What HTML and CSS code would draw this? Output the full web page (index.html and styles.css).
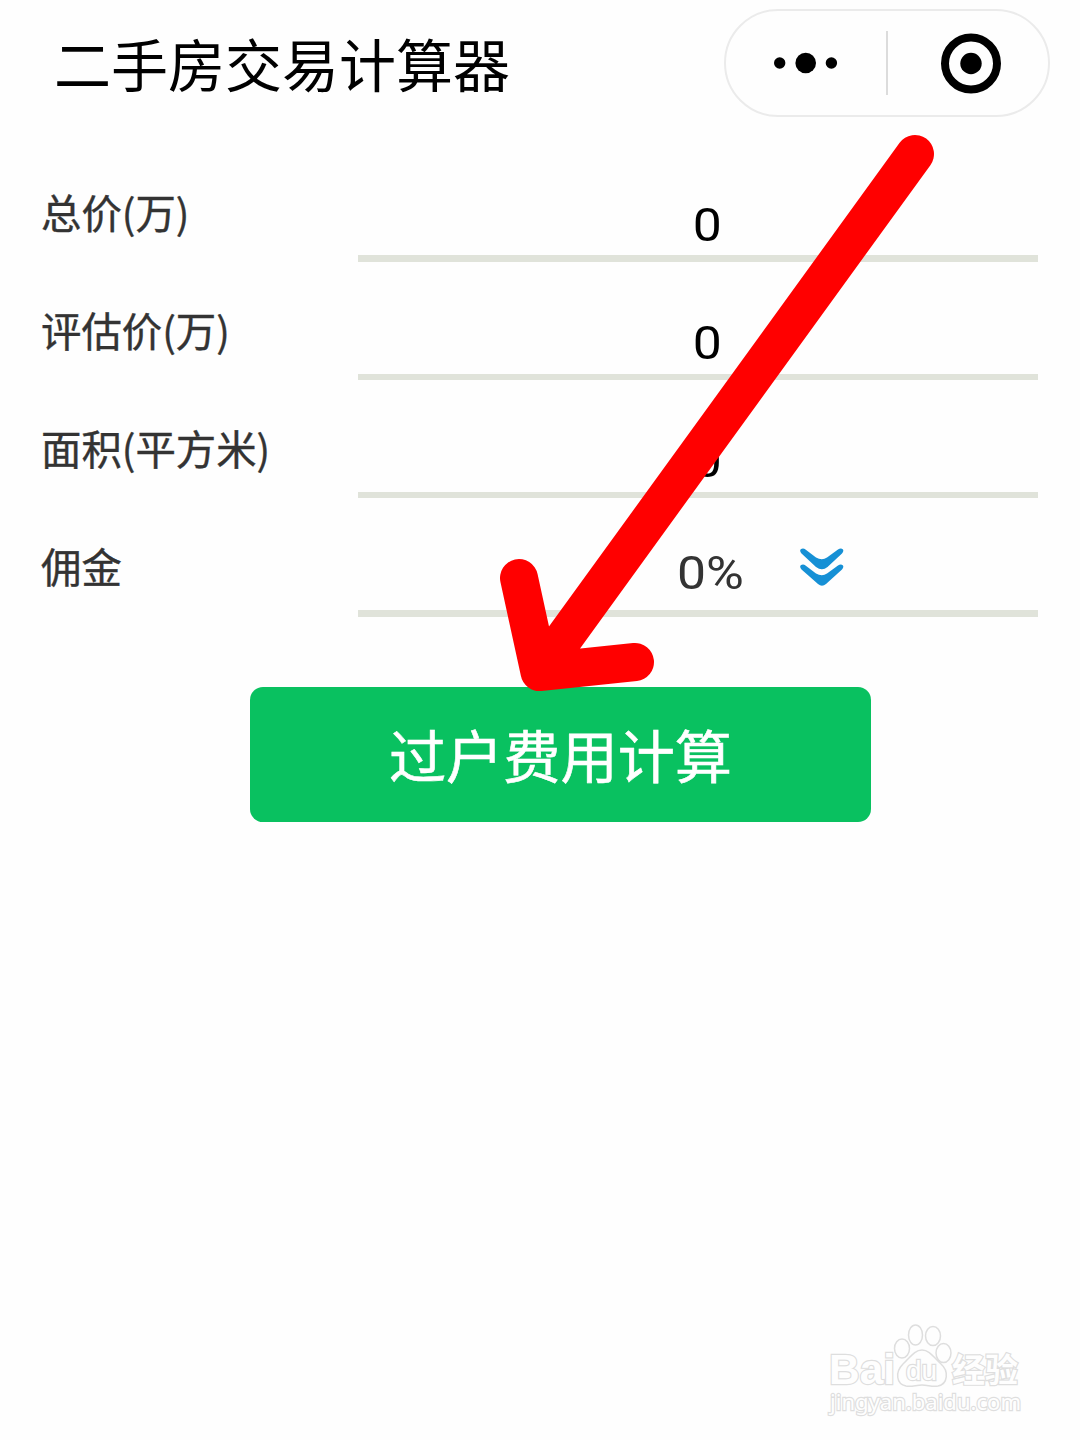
FILE: index.html
```html
<!DOCTYPE html>
<html lang="zh-CN">
<head>
<meta charset="utf-8">
<title>二手房交易计算器</title>
<link rel="stylesheet" href="styles.css">
</head>
<body>
<div class="page">
  <header class="header">
    <h1 class="title">二手房交易计算器</h1>
    <div class="capsule">
      <svg class="capsule-icon" width="160" height="104" viewBox="0 0 160 104">
        <circle cx="53.7" cy="52" r="5.7"/><circle cx="79.7" cy="52" r="10.3"/><circle cx="105.4" cy="52" r="5.7"/>
      </svg>
      <span class="capsule-divider"></span>
      <svg class="capsule-icon" width="160" height="104" viewBox="0 0 160 104">
        <circle cx="83" cy="52.5" r="26" fill="none" stroke="#000" stroke-width="8"/><circle cx="83" cy="52.5" r="10.7"/>
      </svg>
    </div>
  </header>
  <main class="form">
    <div class="row"><span class="label">总价(万)</span><div class="field thick"><span class="value">0</span></div></div>
    <div class="row"><span class="label">评估价(万)</span><div class="field"><span class="value">0</span></div></div>
    <div class="row"><span class="label">面积(平方米)</span><div class="field"><span class="value">0</span></div></div>
    <div class="row last"><span class="label">佣金</span><div class="field select thick"><span class="value">0%</span>
      <svg class="chevrons" width="44" height="40" viewBox="0 0 44 40">
        <path d="M0.5 1.5Q3 -0.5 5.5 1.5L16 9.5Q22 13 27 9.5L38 1.5Q41 -0.5 43 1.5Q44 3.500 42 5.500L27.500 19Q22 23.500 16 19L1.500 5.500Q-0.500 3.500 0.500 1.500Z"/>
        <path d="M0.5 17.500Q3 15.500 5.500 17.500L16 25.500Q22 29 27 25.500L38 17.500Q41 15.500 43 17.500Q44 19.500 42 21.500L26 36Q22 39.500 18 36L1.500 21.500Q-0.500 19.500 0.500 17.500Z"/>
      </svg></div></div>
    <button class="submit">过户费用计算</button>
  </main>
  <svg class="pointer" width="440" height="562" viewBox="497 132 440 562">
    <path d="M915 154L539.5 672M519 578L539.5 672L635 662"/>
  </svg>
  <svg class="watermark" width="210" height="104" viewBox="820 1318 210 104">
    <g class="wm-shape">
      <ellipse cx="902" cy="1348.5" rx="7.5" ry="9.5"/>
      <ellipse cx="915.5" cy="1335" rx="7" ry="10"/>
      <ellipse cx="933" cy="1336" rx="7.5" ry="9.5"/>
      <ellipse cx="943.5" cy="1353" rx="7.5" ry="9.5"/>
      <path d="M922 1350C930 1350 934 1358 941 1364C949 1371 948 1384 938 1386C932 1387 928 1385 922 1385C916 1385 912 1387 906 1386C896 1384 895 1372 903 1364C910 1358 914 1350 922 1350Z"/>
    </g>
    <text class="wm-text wm-bold" x="829" y="1384" font-size="42" textLength="66" lengthAdjust="spacingAndGlyphs">Bai</text>
    <text class="wm-text" x="906" y="1380" font-size="27" textLength="31" lengthAdjust="spacingAndGlyphs">du</text>
    <text class="wm-text wm-bold" x="952" y="1382" font-size="33" textLength="66" lengthAdjust="spacingAndGlyphs">经验</text>
    <text class="wm-text wm-url" x="830" y="1410" font-size="22" textLength="191" lengthAdjust="spacingAndGlyphs">jingyan.baidu.com</text>
  </svg>
</div>
</body>
</html>
```
FILE: styles.css
```css
* { box-sizing: border-box; }
body {
  margin: 0;
  background: #fefefe;
  font-family: "Noto Sans CJK SC", sans-serif;
}
.page {
  position: relative;
  width: 1080px;
  height: 1440px;
  overflow: hidden;
}
.header {
  display: flex;
  justify-content: space-between;
  align-items: flex-start;
  height: 144px;
  padding: 9px 30px 0 54px;
}
.title {
  margin: 11px 0 0;
  font-size: 57px;
  line-height: 84px;
  font-weight: 400;
  color: #000;
}
.capsule {
  display: flex;
  align-items: center;
  width: 326px;
  height: 108px;
  border: 2px solid #ebebeb;
  border-radius: 54px;
}
.capsule-icon { display: block; }
.capsule-divider {
  width: 2px;
  height: 64px;
  background: #dcdcdc;
}
.row {
  display: flex;
  justify-content: space-between;
  height: 118px;
  padding: 0 42px 0 41px;
}
.row.last { height: 119px; }
.label {
  padding-top: 38px;
  font-size: 40.4px;
  line-height: 60px;
  font-weight: 400;
  color: #333;
  -webkit-text-stroke: 0.4px #333;
}
.field {
  display: flex;
  justify-content: center;
  width: 680px;
  padding: 53px 0 0 18px;
  border-bottom: 6px solid #e0e3da;
}
.field.thick { border-bottom-width: 7px; }
.value {
  font-family: Roboto, sans-serif;
  font-size: 47px;
  line-height: 56px;
  color: #000;
  transform: scaleX(1.1);
}
.select {
  justify-content: flex-start;
  gap: 59px;
  padding: 50px 0 0 322px;
}
.select .value { color: #333; line-height: 50px; }
.chevrons { display: block; fill: #1690d5; }
.submit {
  display: block;
  width: 621px;
  height: 135px;
  margin: 70px 0 0 250px;
  padding: 0 0 4px;
  border: 0;
  border-radius: 13px;
  background: #09c160;
  color: #fff;
  font-family: inherit;
  font-size: 57.2px;
  line-height: 84px;
  -webkit-text-stroke: 0.6px #fff;
}
.pointer {
  position: absolute;
  left: 497px;
  top: 132px;
  fill: none;
  stroke: #f00;
  stroke-width: 38px;
  stroke-linecap: round;
  stroke-linejoin: round;
}
.watermark {
  position: absolute;
  left: 820px;
  top: 1318px;
}
.wm-shape, .wm-text {
  fill: #fefefe;
  stroke: #dedede;
  stroke-width: 1.5px;
}
.wm-text {
  font-family: "Liberation Sans", "Noto Sans CJK SC", sans-serif;
  stroke-width: 2.4px;
  paint-order: stroke;
}
.wm-bold { font-weight: 700; }
.wm-url { font-family: "Noto Sans", sans-serif; }
```
